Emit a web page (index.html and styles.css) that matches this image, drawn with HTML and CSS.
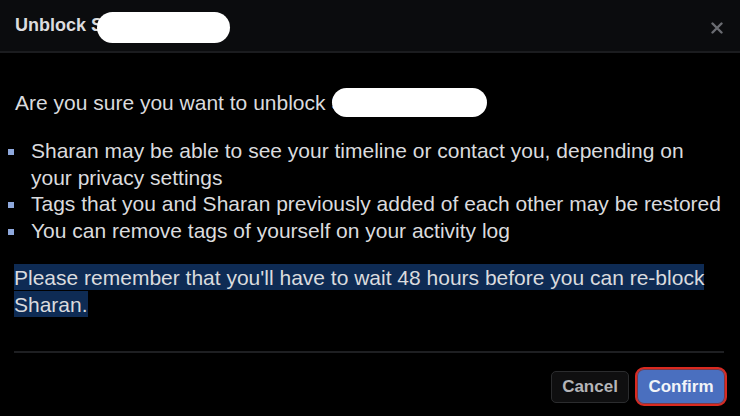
FILE: index.html
```html
<!DOCTYPE html>
<html>
<head>
<meta charset="utf-8">
<link rel="stylesheet" href="styles.css">
</head>
<body>
<div class="dialog">
  <div class="header">
    <span class="title">Unblock S</span><span class="pill pill-title"></span>
    <span class="close" aria-label="Close">
      <svg width="12" height="12" viewBox="0 0 12 12"><path d="M1.5 1.5 L10.5 10.5 M10.5 1.5 L1.5 10.5" stroke="#6a6c71" stroke-width="2.4" stroke-linecap="round"/></svg>
    </span>
  </div>
  <div class="content">
    <p class="question">Are you sure you want to unblock S<span class="pill pill-q"></span></p>
    <ul class="list">
      <li>Sharan may be able to see your timeline or contact you, depending on your privacy settings</li>
      <li>Tags that you and Sharan previously added of each other may be restored</li>
      <li>You can remove tags of yourself on your activity log</li>
    </ul>
    <p class="note"><span class="sel">Please remember that you'll have to wait 48 hours before you can re-block Sharan.</span></p>
  </div>
  <div class="footer">
    <button class="btn cancel">Cancel</button>
    <button class="btn confirm">Confirm</button>
  </div>
</div>
</body>
</html>
```

FILE: styles.css
```css
html, body {
  margin: 0;
  padding: 0;
  background: #000;
}
body {
  font-family: "Liberation Sans", Arial, sans-serif;
  color: #dadbde;
  width: 740px;
  height: 416px;
  overflow: hidden;
}
.dialog {
  display: flex;
  flex-direction: column;
  height: 416px;
}
.header {
  height: 51px;
  background: #0b0c0e;
  border-bottom: 2px solid #1b1c1f;
  display: flex;
  align-items: center;
  padding: 0 17px 0 15px;
}
.title {
  font-size: 18px;
  font-weight: bold;
  color: #dcdcde;
  white-space: pre;
}
.pill {
  display: inline-block;
  background: #fff;
  border-radius: 16px;
}
.pill-title {
  width: 133px;
  height: 31px;
  margin-left: -6px;
  margin-top: 4px;
}
.close {
  margin-left: auto;
  display: flex;
  margin-top: 4px;
}
.content {
  padding: 0 10px 0 15px;
  flex: 1;
}
.question {
  margin: 35px 0 0;
  font-size: 21px;
  line-height: 24px;
  display: flex;
  align-items: center;
  white-space: pre;
}
.pill-q {
  width: 155px;
  height: 29px;
  border-radius: 15px;
  margin-left: -13px;
}
.list {
  margin: 21px 0 0;
  padding: 0 0 0 16px;
  list-style: none;
  font-size: 21px;
  line-height: 26.7px;
}
.list li {
  position: relative;
}
.list li::before {
  content: "";
  position: absolute;
  left: -23px;
  top: 11px;
  width: 6px;
  height: 6px;
  background: #8ea8dc;
}
.note {
  margin: 20px 15px 0 -1px;
  font-size: 21px;
  line-height: 26.7px;
}
.sel {
  background: #0e2b54;
  padding: 2px 0 1px;
}
.footer {
  margin: 0 16px 10px 14px;
  border-top: 2px solid #1e1f22;
  padding-top: 14px;
  display: flex;
  justify-content: flex-end;
  gap: 6px;
  align-items: center;
}
.btn {
  font-family: "Liberation Sans", Arial, sans-serif;
  font-weight: bold;
  font-size: 17px;
  border-radius: 5px;
  cursor: pointer;
}
.cancel {
  background: #0f0f10;
  border: 1px solid #2b2c2e;
  color: #b4b5b8;
  width: 78px;
  height: 32px;
}
.confirm {
  background: #4a6fbf;
  color: #f2f4f8;
  width: 92px;
  height: 39px;
  border: 2px solid #d92a20;
  border-radius: 9px;
  margin-right: -3px;
  box-shadow: inset 0 0 0 1px #7a3a4a;
}
```
